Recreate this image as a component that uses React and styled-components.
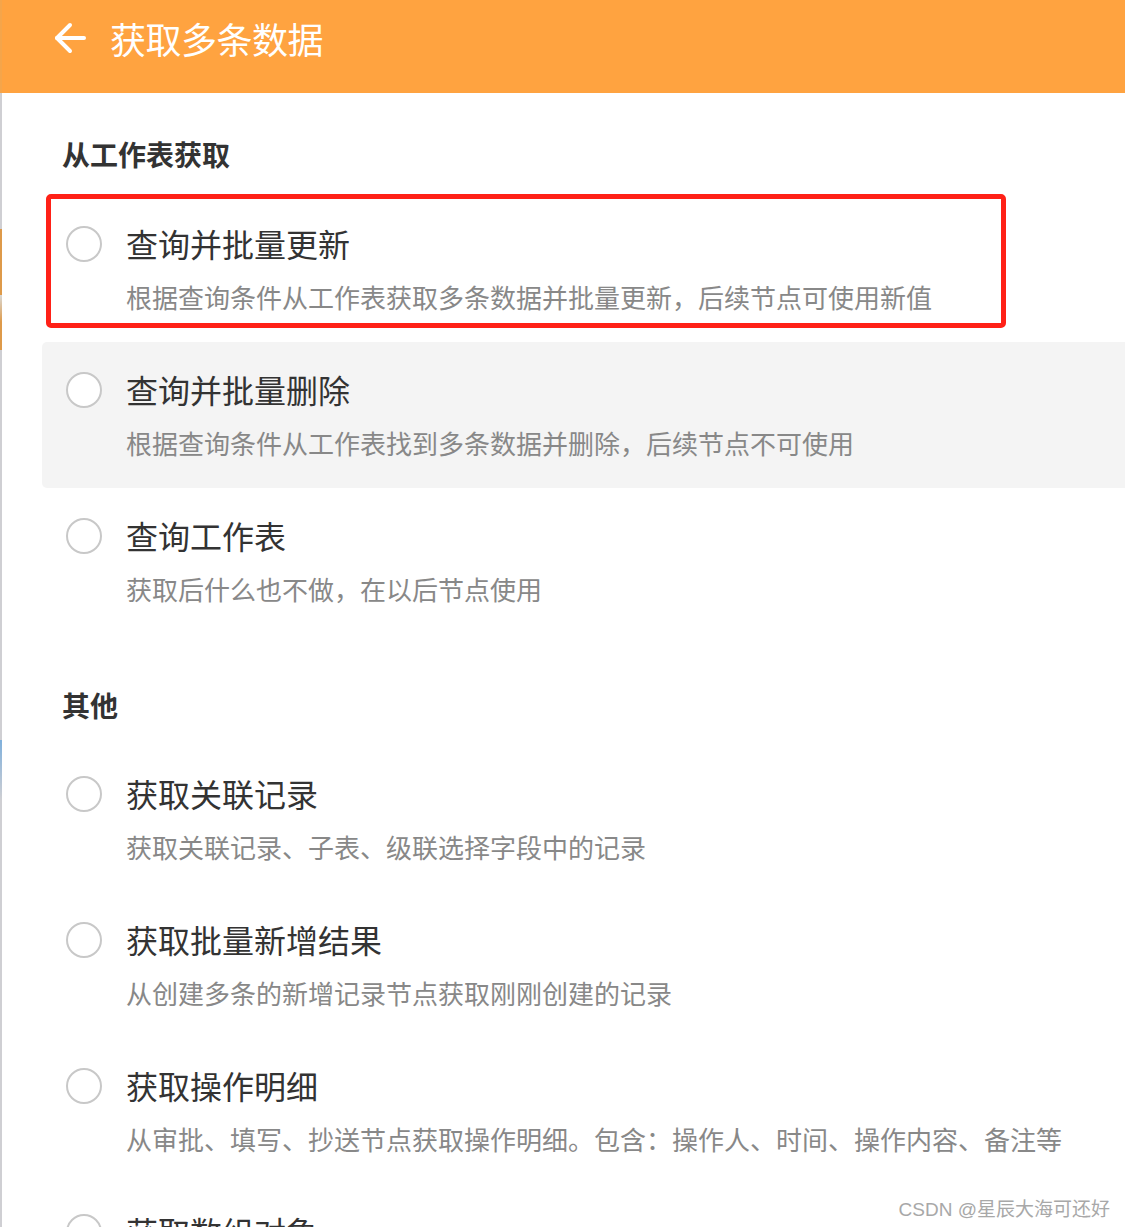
import React from 'react';
import styled, { createGlobalStyle } from 'styled-components';

const GlobalStyle = createGlobalStyle`
  html, body {
    margin: 0;
    padding: 0;
    background: #fff;
  }
  body {
    font-family: 'Microsoft YaHei', 'Noto Sans CJK SC', 'Noto Sans', sans-serif;
  }
`;

const Page = styled.div`
  position: relative;
  display: flex;
  width: 1125px;
  height: 1227px;
  overflow: hidden;
  background: #fff;
`;

const EdgeStrip = styled.div`
  flex: 0 0 2px;
  background: linear-gradient(
    to bottom,
    #f5a54a 0,
    #f5a54a 93px,
    #cfcfd3 93px,
    #cfcfd3 229px,
    #de9a4a 229px,
    #de9a4a 295px,
    #d9d9d6 295px,
    #de9a4a 322px,
    #de9a4a 350px,
    #cfcfd3 350px,
    #cfcfd3 740px,
    #7fb0dc 740px,
    #cfcfd3 800px
  );
`;

const Main = styled.div`
  flex: 1;
  min-width: 0;
`;

const Header = styled.div`
  height: 93px;
  box-sizing: border-box;
  padding: 14px 0 0 52px;
  background: #ffa340;
  display: flex;
  align-items: flex-start;
  gap: 24px;
  color: #fff;
`;

const BackButton = styled.div`
  height: 48px;
  display: flex;
  align-items: center;
`;

const Title = styled.div`
  font-size: 36px;
  line-height: 48px;
  letter-spacing: -0.5px;
`;

const SectionTitle = styled.div`
  padding: ${p => (p.$first ? '43px' : '53px')} 0 ${p => (p.$first ? '24px' : '23px')} 60px;
  font-size: 28px;
  line-height: 36px;
  font-weight: 700;
  color: #333;
`;

const List = styled.div`
  display: flex;
  flex-direction: column;
  margin-left: 40px;
`;

const Item = styled.div`
  position: relative;
  flex-shrink: 0;
  display: flex;
  gap: 24px;
  height: 146px;
  box-sizing: border-box;
  padding: 27px 24px 0;
  border-radius: 5px 0 0 5px;
  background: ${p => (p.$hover ? '#f4f4f4' : 'transparent')};
`;

const Radio = styled.div`
  flex: 0 0 auto;
  width: 36px;
  height: 36px;
  margin-top: 3px;
  box-sizing: border-box;
  border: 2px solid #c8c8c8;
  border-radius: 50%;
  background: #fff;
`;

const Texts = styled.div`
  display: flex;
  flex-direction: column;
  gap: 17px;
`;

const ItemTitle = styled.div`
  font-size: 32px;
  line-height: 40px;
  color: #333;
  white-space: nowrap;
`;

const ItemDesc = styled.div`
  font-size: 26px;
  line-height: 34px;
  color: #888;
  white-space: nowrap;
`;

const Annotation = styled.div`
  position: absolute;
  left: 4px;
  top: -2px;
  width: 960px;
  height: 134px;
  box-sizing: border-box;
  border: 5px solid #ff2117;
  border-radius: 5px;
  pointer-events: none;
`;

const Watermark = styled.div`
  position: absolute;
  right: 15px;
  bottom: 6px;
  font-family: 'Liberation Sans', 'Noto Sans CJK SC', sans-serif;
  font-size: 19px;
  color: #a8a8a8;
  text-shadow: 0 0 2px #fff;
`;

const ArrowLeft = () => (
  <svg width="32" height="32" viewBox="0 0 32 32" fill="none" stroke="#fff" strokeWidth="4" strokeLinecap="round" strokeLinejoin="round">
    <path d="M30 16H3" />
    <path d="M16 3 3 16l13 13" />
  </svg>
);

const sheetItems = [
  { title: '查询并批量更新', desc: '根据查询条件从工作表获取多条数据并批量更新，后续节点可使用新值', marked: true },
  { title: '查询并批量删除', desc: '根据查询条件从工作表找到多条数据并删除，后续节点不可使用', hover: true },
  { title: '查询工作表', desc: '获取后什么也不做，在以后节点使用' },
];

const otherItems = [
  { title: '获取关联记录', desc: '获取关联记录、子表、级联选择字段中的记录' },
  { title: '获取批量新增结果', desc: '从创建多条的新增记录节点获取刚刚创建的记录' },
  { title: '获取操作明细', desc: '从审批、填写、抄送节点获取操作明细。包含：操作人、时间、操作内容、备注等' },
  { title: '获取数组对象', desc: '从发送API请求、代码块、JSON解析节点获取数组对象' },
];

const Option = ({ title, desc, marked, hover }) => (
  <Item $hover={hover}>
    <Radio />
    <Texts>
      <ItemTitle>{title}</ItemTitle>
      <ItemDesc>{desc}</ItemDesc>
    </Texts>
    {marked && <Annotation />}
  </Item>
);

export default function App() {
  return (
    <>
      <GlobalStyle />
      <Page>
        <EdgeStrip />
        <Main>
          <Header>
            <BackButton>
              <ArrowLeft />
            </BackButton>
            <Title>获取多条数据</Title>
          </Header>
          <SectionTitle $first>从工作表获取</SectionTitle>
          <List>
            {sheetItems.map(item => (
              <Option key={item.title} {...item} />
            ))}
          </List>
          <SectionTitle>其他</SectionTitle>
          <List>
            {otherItems.map(item => (
              <Option key={item.title} {...item} />
            ))}
          </List>
        </Main>
        <Watermark>CSDN @星辰大海可还好</Watermark>
      </Page>
    </>
  );
}
